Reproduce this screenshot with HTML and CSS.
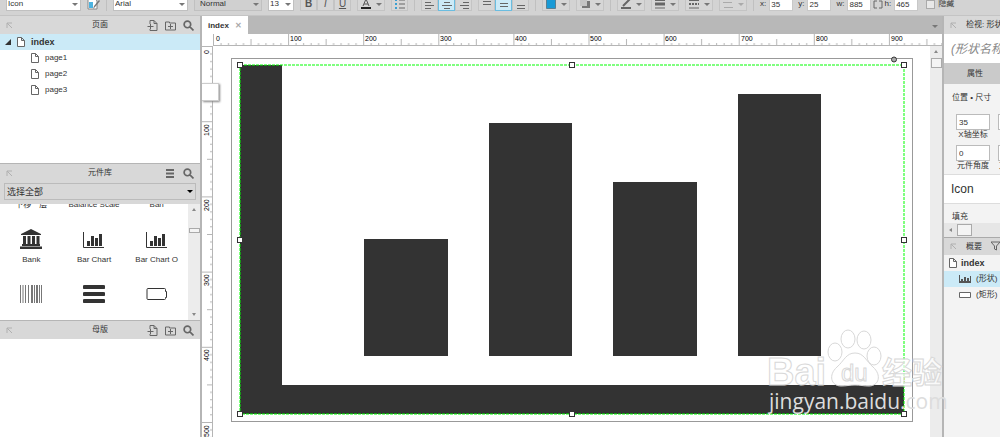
FILE: index.html
```
<!DOCTYPE html>
<html lang="zh-CN">
  <head>
    <meta charset="UTF-8" />
    <meta name="viewport" content="width=device-width, initial-scale=1.0" />
    <link rel="stylesheet" href="styles.css" />
    <title>index</title>
  </head>
  <body>
    <!-- shared icons -->
    <svg class="sprite" aria-hidden="true">
      <symbol id="pin" viewBox="0 0 7 7"><path d="M1 6V1h5M1 1l5 5" /></symbol>
      <symbol id="page" viewBox="0 0 8 10"><path d="M.5.5h4l3 3v6h-7zM4.500.5v3h3" /></symbol>
      <symbol id="add-page" viewBox="0 0 10 11"><path d="M2.500 4V.5h4l3 3v7h-7V9M6.500.5v3h3M0 6.500h6M3 4v5" /></symbol>
      <symbol id="add-folder" viewBox="0 0 11 10"><path d="M.5 9.500v-8h4v1h6v7zM3 6h5M5.500 3.500v5" /></symbol>
      <symbol id="search" viewBox="0 0 10 10"><path d="M7 4a3 3 0 1 1-6 0 3 3 0 0 1 6 0zM6.300 6.300L9.500 9.500" stroke-width="1.500" /></symbol>
      <symbol id="menu" viewBox="0 0 11 11"><path d="M1 2h8M1 5.500h8M1 9h8" stroke-width="2" /></symbol>
      <symbol id="chart" viewBox="0 0 22 18"><path d="M.5 1v15.500H21" fill="none" stroke="#333" /><path d="M4 10h3v5H4zM8 5h3v10H8zM12 7h3v8h-3zM16 3h3v12h-3z" fill="#333" /></symbol>
    </svg>

    <header class="toolbar">
      <span class="select"><select class="w-75" aria-label="Style"><option>Icon</option></select></span>
      <button class="plain" aria-label="Style manager">
        <svg width="13" height="12"><path d="M1 0h7l2 3v8H1z" fill="#fff" stroke="#888" /><path d="M2 4h4v6H2z" fill="#4db3e0" /><path d="M6 11l1-3 5-6 1 1-5 6z" fill="#777" /></svg>
      </button>
      <i class="sep"></i>
      <span class="select"><select class="w-75" aria-label="Font"><option>Arial</option></select></span>
      <span class="select dim"><select class="w-68" aria-label="Weight"><option>Normal</option></select></span>
      <span class="select"><select class="w-26" aria-label="Size"><option>13</option></select></span>
      <div class="group">
        <button><b>B</b></button>
        <button><i>I</i></button>
        <button><u>U</u></button>
      </div>
      <button class="drop" aria-label="Text color"><svg width="10" height="12"><path d="M2 8l3-7 3 7M3 6h4" fill="none" stroke="#555" /><path d="M0 9h10v2H0z" fill="#222" stroke="none" /></svg></button>
      <button aria-label="Bullets"><svg width="10" height="10"><path d="M0 1h2M0 5h2M0 9h2" stroke="#3a9fd0" stroke-width="2" /><path d="M4 1h6M4 5h6M4 9h6" stroke="#666" /></svg></button>
      <i class="sep"></i>
      <div class="group">
        <button aria-label="Left"><svg width="10" height="12"><path d="M0 1.500h10M0 4.500h6M0 7.500h9M0 10.500h6" /></svg></button>
        <button class="on" aria-label="Center"><svg width="10" height="12"><path d="M0 1.500h10M2 4.500h6M0 7.500h10M2 10.500h6" /></svg></button>
        <button aria-label="Right"><svg width="10" height="12"><path d="M0 1.500h10M4 4.500h6M1 7.500h9M4 10.500h6" /></svg></button>
      </div>
      <div class="group">
        <button aria-label="Top"><svg width="8" height="12"><path d="M0 3.500h8M0 6.500h8" /></svg></button>
        <button class="on" aria-label="Middle"><svg width="8" height="12"><path d="M0 5.500h8M0 8.500h8" /></svg></button>
        <button aria-label="Bottom"><svg width="8" height="12"><path d="M0 7.500h8M0 10.500h8" /></svg></button>
      </div>
      <i class="sep"></i>
      <button class="drop" aria-label="Fill"><svg width="10" height="11"><path d="M.5.5h9v9h-9z" fill="#189ad6" stroke="#5a7f91" /></svg></button>
      <button class="drop" aria-label="Shadow"><svg width="10" height="10"><path d="M2 2h8v7H2z" fill="#777" stroke="none" /><path d="M0 0h7v7H0z" fill="#c4c4c4" stroke="none" /></svg></button>
      <i class="sep"></i>
      <button class="drop" aria-label="Line color"><svg width="10" height="11"><path d="M2 7l7-7M0 9h10" stroke-width="2" /></svg></button>
      <button class="drop" aria-label="Line width"><svg width="10" height="11"><path d="M0 1.500h10M0 9h10" /><path d="M0 5h10" stroke-width="3" /></svg></button>
      <button class="drop" aria-label="Line style"><svg width="10" height="11"><path d="M0 1.500h10M0 9h10" /><path d="M0 5h10" stroke-width="2" stroke-dasharray="2 1" /></svg></button>
      <button class="drop off" aria-label="Arrows"><svg width="10" height="11"><path d="M0 3.500h9M1 8.500h9" stroke="#aaa" /></svg></button>
      <i class="sep"></i>
      <div class="fields">
        <label>x:<input class="w-24" value="35" /></label>
        <label>y:<input class="w-24" value="25" /></label>
        <label>w:<input class="w-24" value="885" /></label>
      </div>
      <svg class="link" width="10" height="9"><path d="M4 1H1v7h3M6 1h3v7H6" /></svg>
      <div class="fields">
        <label>h:<input class="w-24" value="465" /></label>
        <label class="hide"><input type="checkbox" />隐藏</label>
      </div>
    </header>

    <main>
      <aside class="left">
        <section class="pages">
          <h2 class="head">
            <svg class="pin"><use href="#pin" /></svg>
            <span>页面</span>
            <svg><use href="#add-page" /></svg>
            <svg><use href="#add-folder" /></svg>
            <svg><use href="#search" /></svg>
          </h2>
          <ul class="tree">
            <li class="root active"><i class="expand"></i><svg><use href="#page" /></svg><a href="#index">index</a></li>
            <li><svg><use href="#page" /></svg><a href="#page1">page1</a></li>
            <li><svg><use href="#page" /></svg><a href="#page2">page2</a></li>
            <li><svg><use href="#page" /></svg><a href="#page3">page3</a></li>
          </ul>
        </section>

        <section class="library">
          <h2 class="head">
            <svg class="pin"><use href="#pin" /></svg>
            <span>元件库</span>
            <svg><use href="#menu" /></svg>
            <svg><use href="#search" /></svg>
          </h2>
          <div class="picker">
            <span class="select"><select aria-label="元件库"><option>选择全部</option></select></span>
          </div>
          <div class="widgets">
            <ul>
              <li>下移一层</li>
              <li>Balance Scale</li>
              <li>Ban</li>
              <li>
                <svg width="22" height="20"><path d="M11 0l10 5v1H1V5zM3 7h3v8H3zM7.500 7h3v8h-3zM12 7h3v8h-3zM16.500 7h3v8h-3zM2 15h18v2H2zM0 17.500h22V20H0z" fill="#333" /></svg>
                Bank
              </li>
              <li>
                <svg width="22" height="18"><use href="#chart" /></svg>
                Bar Chart
              </li>
              <li>
                <svg width="22" height="18"><use href="#chart" /></svg>
                Bar Chart O
              </li>
              <li>
                <svg width="22" height="18"><path d="M.5 0v18M3 0v18M5.500 0v18M8.500 0v18M11.500 0v18M12.500 0v18M14.500 0v18M16.500 0v18M17.500 0v18M19.500 0v18M21.500 0v18" stroke="#777" /></svg>
              </li>
              <li>
                <svg width="22" height="18"><path d="M1.500 2h19M1.500 9h19M1.500 16h19" stroke="#333" stroke-width="4" stroke-linecap="round" /></svg>
              </li>
              <li>
                <svg width="22" height="18"><path d="M2 3.500h16.500q1 0 1 1v2h1v6h-1v1q0 1-1 1H2q-1 0-1-1v-9q0-1 1-1z" fill="none" stroke="#333" /></svg>
              </li>
            </ul>
            <div class="scroll">
              <i class="up"></i>
              <i class="thumb"></i>
              <i class="down"></i>
            </div>
          </div>
        </section>

        <section class="masters">
          <h2 class="head">
            <svg class="pin"><use href="#pin" /></svg>
            <span>母版</span>
            <svg><use href="#add-page" /></svg>
            <svg><use href="#add-folder" /></svg>
            <svg><use href="#search" /></svg>
          </h2>
        </section>
      </aside>

      <section class="editor">
        <nav class="tabs">
          <a href="#index">index <span>✕</span></a>
          <i class="caret"></i>
        </nav>
        <svg class="ruler-x">
          <defs>
            <pattern id="ticks-x" width="75.100" height="12" patternUnits="userSpaceOnUse">
              <path d="M.5 0v12M8 9v3M15.500 9v3M23 9v3M30.500 9v3M38 5v7M45.500 9v3M53 9v3M60.500 9v3M68 9v3" />
            </pattern>
          </defs>
          <rect width="100%" height="12" fill="url(#ticks-x)" />
          <path d="M0 11.500h2000" />
          <text x="3" y="7">0</text>
          <text x="77" y="7">100</text>
          <text x="152" y="7">200</text>
          <text x="227" y="7">300</text>
          <text x="302" y="7">400</text>
          <text x="377" y="7">500</text>
          <text x="452" y="7">600</text>
          <text x="528" y="7">700</text>
          <text x="603" y="7">800</text>
          <text x="678" y="7">900</text>
        </svg>
        <svg class="ruler-y">
          <defs>
            <pattern id="ticks-y" width="11" height="75.200" patternUnits="userSpaceOnUse">
              <path d="M0 .5h11M8 8h3M8 15.500h3M8 23h3M8 30.500h3M5 38h6M8 45.500h3M8 53h3M8 60.500h3M8 68h3" />
            </pattern>
          </defs>
          <rect width="11" height="100%" fill="url(#ticks-y)" />
          <path d="M10.500 0v2000" />
          <g transform="rotate(-90)">
            <text x="-8" y="7">0</text>
            <text x="-90" y="7">100</text>
            <text x="-165" y="7">200</text>
            <text x="-240" y="7">300</text>
            <text x="-315" y="7">400</text>
            <text x="-391" y="7">500</text>
          </g>
        </svg>
        <svg class="canvas">
          <rect class="sheet" x="18.500" y="12.500" width="681" height="363" />
          <g class="bars">
            <path d="M27 19h42v320h622v29H27z" />
            <rect x="151" y="193" width="84" height="117" />
            <rect x="276" y="77" width="83" height="233" />
            <rect x="400" y="136" width="84" height="174" />
            <rect x="525" y="48" width="83" height="262" />
          </g>
          <rect class="selection" x="27" y="19" width="664" height="349" />
          <g class="handles">
            <rect x="24.500" y="16.500" width="5" height="5" />
            <rect x="356.500" y="16.500" width="5" height="5" />
            <rect x="688.500" y="16.500" width="5" height="5" />
            <rect x="24.500" y="191.500" width="5" height="5" />
            <rect x="688.500" y="191.500" width="5" height="5" />
            <rect x="24.500" y="365.500" width="5" height="5" />
            <rect x="356.500" y="365.500" width="5" height="5" />
            <rect x="688.500" y="365.500" width="5" height="5" />
            <circle cx="681" cy="13.500" r="2.500" />
          </g>
        </svg>
        <div class="scroll">
          <i class="up"></i>
          <i class="thumb"></i>
        </div>
        <div class="flyout"></div>
        <svg class="watermark" width="182" height="100">
          <g class="outline">
            <text x="1" y="60" class="bai">Bai</text>
            <ellipse cx="69" cy="27" rx="7" ry="9" />
            <ellipse cx="82" cy="14" rx="7" ry="9" />
            <ellipse cx="98" cy="15" rx="7" ry="9" />
            <ellipse cx="108" cy="31" rx="7" ry="9" />
            <path d="M89 28c9 0 11 8 18 14 9 8 6 19-4 19-6 0-8-1-14-1s-8 1-14 1c-10 0-13-11-4-19 7-6 9-14 18-14z" />
            <text x="75" y="56" class="du">du</text>
            <text x="116" y="58" class="cn">经验</text>
          </g>
          <text x="3" y="84" class="site">jingyan.baidu.com</text>
        </svg>
      </section>

      <aside class="right">
        <h2 class="head">
          <svg class="pin"><use href="#pin" /></svg>
          <span>检视: 形状</span>
        </h2>
        <input class="shape-name" aria-label="名称" placeholder="(形状名称)" />
        <h3>属性</h3>
        <div class="props">
          <h4>位置 • 尺寸</h4>
          <div class="row">
            <label><input value="35" />X轴坐标</label>
            <label><input value="25" />Y轴坐标</label>
          </div>
          <div class="row">
            <label><input value="0" />元件角度</label>
            <label><input value="0" />文字角度</label>
          </div>
        </div>
        <div class="style-name">Icon</div>
        <h4 class="fill">填充</h4>
        <div class="hscroll"><i class="back"></i><i class="thumb"></i></div>
        <h2 class="head outline-head">
          <svg class="pin"><use href="#pin" /></svg>
          <span>概要</span>
          <svg><path d="M0 1h9L5.500 5v4l-2-1V5z" /></svg>
        </h2>
        <ul class="tree shapes">
          <li class="root"><svg><use href="#page" /></svg><a href="#index">index</a></li>
          <li class="active"><svg class="wide" width="13" height="8"><path d="M0 0h1v6h1V4h2v2h1V2h2v4h1V3h2v3h1V1h1v7H0z" fill="#555" /></svg><a href="#shape">(形状)</a></li>
          <li><svg class="wide" width="13" height="8"><path d="M.5 1.500h11v5H.5z" fill="#fff" stroke="#666" /></svg><a href="#rect">(矩形)</a></li>
        </ul>
      </aside>
    </main>
  </body>
</html>
```
FILE: styles.css
```
:root {
  --bar: #d3d3d3;
  --head: #d8d8d8;
  --line: #b5b5b5;
  --active: #cbeaf7;
  --ink: #333;
}

* {
  box-sizing: border-box;
}

body {
  margin: 0;
  height: 100vh;
  display: flex;
  flex-direction: column;
  overflow: hidden;
  color: var(--ink);
  font: 8px/10px "Liberation Sans", "Noto Sans CJK SC", sans-serif;
}

h2,
h3,
h4,
ul {
  margin: 0;
  padding: 0;
  font-size: 8px;
  font-weight: normal;
  list-style: none;
}

a {
  color: inherit;
  text-decoration: none;
}

button,
input,
select {
  margin: 0;
  color: inherit;
  font: inherit;
}

.sprite {
  display: none;
}

/* toolbar */
.toolbar {
  flex: none;
  height: 16px;
  padding: 0 0 4px 6px;
  display: flex;
  align-items: flex-end;
  gap: 6px;
  background: var(--bar);
  border-bottom: 1px solid #c4c4c4;
  white-space: nowrap;
}

.toolbar > * {
  flex: none;
}

.select {
  position: relative;
  display: block;
}

.select select {
  display: block;
  height: 14px;
  padding: 0 1px;
  appearance: none;
  background: #fff;
  border: 1px solid #c0c0c0;
  border-radius: 0;
}

.select::after,
.caret {
  content: "";
  position: absolute;
  right: 3px;
  top: 6px;
  border: 3px solid transparent;
  border-top-color: #777;
  border-bottom: 0;
}

.select.dim select {
  padding-left: 5px;
  background: #d0d0d0;
}

.w-75 {
  width: 75px;
}

.w-68 {
  width: 68px;
}

.w-26 {
  width: 26px;
}

.w-24 {
  width: 24px;
}

.toolbar button {
  width: 17px;
  height: 14px;
  padding: 0;
  display: flex;
  align-items: center;
  justify-content: center;
  background: #d6d6d6;
  border: 1px solid #c4c4c4;
  color: #555;
  font-size: 10px;
  line-height: 10px;
}

.toolbar button svg {
  flex: none;
  fill: none;
  stroke: #666;
}

.toolbar .plain {
  width: 13px;
  background: none;
  border: 0;
}

.toolbar .plain svg {
  stroke: none;
}

.toolbar .drop {
  width: 28px;
  gap: 5px;
}

.drop::after {
  content: "";
  border: 3px solid transparent;
  border-top-color: #777;
  border-bottom: 0;
}

.drop.off::after {
  border-top-color: #aaa;
}

.toolbar .on {
  background: var(--active);
  border-color: #6bbde0;
}

.group,
.fields {
  display: flex;
}

.sep {
  width: 1px;
  height: 14px;
  background: #c0c0c0;
}

.fields {
  gap: 5px;
}

.fields label {
  display: flex;
  align-items: center;
  gap: 3px;
}

.fields input {
  height: 14px;
  padding: 0 1px;
  background: #fff;
  border: 1px solid #c8c8c8;
}

.toolbar .link {
  margin: 0 -5px 2px -4px;
  fill: none;
  stroke: #666;
}

.fields .hide {
  margin-left: 3px;
}

.hide input {
  width: 9px;
  height: 9px;
  appearance: none;
}

/* panels */
main {
  flex: 1;
  min-height: 0;
  display: grid;
  grid-template-columns: 202px 1fr 58px;
}

.left {
  display: flex;
  flex-direction: column;
  min-height: 0;
  background: #fff;
  border-right: 2px solid var(--line);
}

.left section + section {
  border-top: 1px solid var(--line);
}

.head {
  height: 18px;
  padding: 0 6px;
  display: flex;
  align-items: center;
  gap: 7px;
  position: relative;
  background: var(--head);
}

.head svg {
  flex: none;
  width: 11px;
  height: 11px;
  fill: none;
  stroke: #666;
}

.head .pin {
  width: 7px;
  height: 7px;
  stroke: #b0b0b0;
}

.left .head span {
  position: absolute;
  left: 0;
  right: 0;
  text-align: center;
}

.left .head .pin {
  margin-right: auto;
}

.tree li {
  height: 16px;
  padding-left: 31px;
  display: flex;
  align-items: center;
  gap: 6px;
}

.tree svg {
  flex: none;
  width: 8px;
  height: 10px;
  fill: #fff;
  stroke: #666;
}

.tree .root {
  padding-left: 5px;
  font-size: 9px;
  font-weight: bold;
}

.tree .active {
  background: var(--active);
}

.expand {
  border: 3px solid #333;
  border-top-color: transparent;
  border-left-color: transparent;
}

.pages {
  flex: 0 0 147px;
}

.library {
  flex: 0 0 147px;
  display: flex;
  flex-direction: column;
}

.masters {
  flex: 1;
}

.picker {
  padding: 1px 4px 4px;
  background: var(--head);
}

.picker select {
  width: 100%;
  height: 17px;
  padding-left: 2px;
  background: var(--head);
  border-color: #bbb;
  font-size: 9px;
}

.picker .select::after {
  top: 7px;
  border-top-color: #000;
}

.widgets {
  flex: 1;
  min-height: 0;
  display: flex;
  overflow: hidden;
}

.widgets ul {
  flex: 1;
  height: 165px;
  margin-top: -49px;
  display: grid;
  grid-template-columns: repeat(3, 1fr);
  grid-auto-rows: 55px;
}

.widgets li {
  display: flex;
  flex-direction: column;
  align-items: center;
  justify-content: flex-end;
  gap: 6px;
  white-space: nowrap;
}

.widgets li:nth-child(n + 7) {
  padding-bottom: 17px;
}

.scroll {
  width: 12px;
  padding: 4px 0;
  display: flex;
  flex-direction: column;
  align-items: center;
  background: #ececec;
}

.up,
.down {
  border: 2px solid transparent;
  border-bottom: 3px solid #888;
  border-top: 0;
}

.down {
  margin-top: auto;
  border-top: 3px solid #888;
  border-bottom: 0;
}

.thumb {
  width: 11px;
  height: 5px;
  margin-top: 17px;
  background: #f4f4f4;
  border: 1px solid #aaa;
}

/* editor */
.editor {
  position: relative;
  min-width: 0;
  min-height: 0;
  display: grid;
  grid-template-columns: 11px 1fr 12px;
  grid-template-rows: 18px 12px 1fr;
  background: #fff;
}

.tabs {
  grid-column: 1 / -1;
  position: relative;
  display: flex;
  background: #b8b8b8;
}

.tabs a {
  padding: 5px 6px 0;
  display: flex;
  gap: 6px;
  background: #fff;
  font-weight: bold;
}

.tabs span {
  color: #aaa;
}

.tabs .caret {
  top: 9px;
  right: 4px;
}

.ruler-x {
  grid-column: 2 / -1;
  width: 100%;
  height: 12px;
}

.ruler-y {
  grid-column: 1;
  width: 11px;
  height: 100%;
}

.ruler-x path,
.ruler-y path {
  stroke: #b5b5b5;
}

.ruler-x text,
.ruler-y text {
  font-size: 7px;
}

.canvas {
  width: 100%;
  height: 100%;
}

.sheet {
  fill: #fff;
  stroke: #999;
}

.bars {
  fill: #333;
}

.selection {
  fill: none;
  stroke: #0f0;
  stroke-dasharray: 3 1;
}

.handles {
  fill: #fff;
  stroke: #333;
}

.handles circle {
  fill: #aaa;
}

.editor .thumb {
  height: 10px;
  margin-top: 5px;
}

.flyout {
  position: absolute;
  left: 0;
  top: 67px;
  width: 17px;
  height: 18px;
  background: #fff;
  border: 1px solid #ccc;
  border-left: 0;
  box-shadow: 1px 1px 2px #888;
}

.watermark {
  position: absolute;
  right: -6px;
  bottom: 12px;
  z-index: 1;
}

.outline {
  fill: #fff;
  fill-opacity: 0.7;
  stroke: #d8d8d8;
}

.bai {
  font: bold 38px "Liberation Sans", sans-serif;
}

.du {
  font: 24px "Liberation Sans", sans-serif;
}

.cn {
  font: bold 30px "Noto Sans CJK SC", sans-serif;
}

.site {
  font: 21px "Open Sans", sans-serif;
  fill: #ddd;
}

/* inspector */
.right {
  min-width: 0;
  overflow: hidden;
  background: #f3f3f3;
  border-left: 2px solid var(--line);
  white-space: nowrap;
}

.right .head {
  gap: 9px;
}

.shape-name {
  display: block;
  width: 100%;
  height: 29px;
  padding: 0 0 0 7px;
  background: #fff;
  border: 0;
  font-size: 12px;
  font-style: italic;
}

.shape-name::placeholder {
  color: #888;
  text-overflow: clip;
}

.right h3 {
  height: 21px;
  padding-left: 23px;
  line-height: 21px;
  background: #cacaca;
}

.props {
  height: 90px;
  padding: 9px 0 0 12px;
}

.right h4 {
  margin-left: -4px;
  margin-bottom: 11px;
}

.row {
  display: flex;
  gap: 8px;
  margin-bottom: 5px;
}

.row label {
  width: 34px;
  flex: none;
  display: flex;
  flex-direction: column;
  align-items: center;
}

.row input {
  width: 34px;
  height: 16px;
  padding: 0 2px;
  background: #fff;
  border: 1px solid #bbb;
}

.style-name {
  height: 30px;
  padding-left: 7px;
  background: #fff;
  border: solid #ddd;
  border-width: 1px 0;
  font-size: 12px;
  line-height: 28px;
}

.right .fill {
  margin: 8px 0 1px 8px;
}

.hscroll {
  height: 14px;
  padding-left: 5px;
  display: flex;
  align-items: center;
  gap: 5px;
  background: #e6e6e6;
}

.back {
  border: 2px solid transparent;
  border-right: 3px solid #888;
  border-left: 0;
}

.hscroll .thumb {
  width: 15px;
  height: 12px;
  margin: 0;
}

.outline-head {
  border-top: 1px solid #aaa;
}

.shapes li {
  padding-left: 15px;
  gap: 4px;
}

.shapes .wide {
  width: 13px;
  height: 8px;
  stroke: none;
}

.hide input {
  background: #e8e8e8;
  border: 1px solid #aaa;
}
```
